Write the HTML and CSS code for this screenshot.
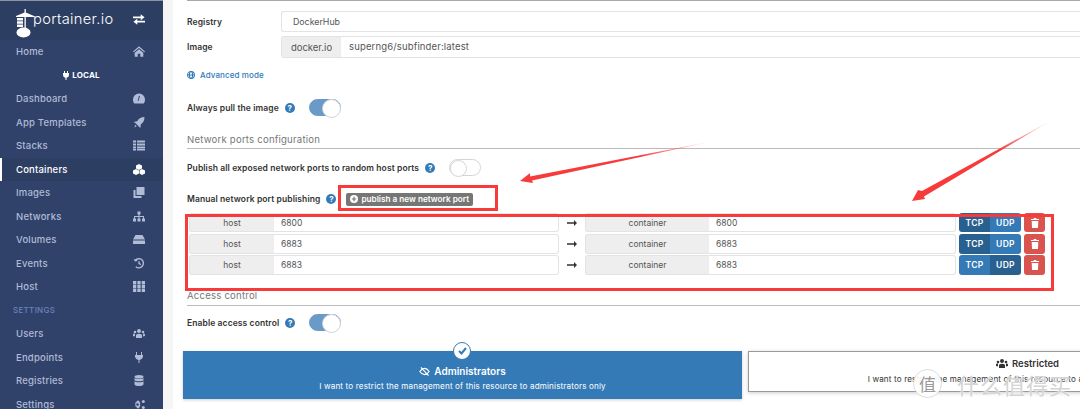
FILE: index.html
```html
<!DOCTYPE html>
<html lang="en">
<head>
  <meta charset="UTF-8">
  <title>Portainer - Create container</title>
  <link rel="stylesheet" href="styles.css">
</head>
<body>

<div class="page">
  <aside class="sidebar">
    <div class="brand">
      <svg class="brand-logo" width="21" height="29" viewBox="0 0 21 29" fill="#fff">
        <path d="M8.500 0h1.300v3.500L18 7v1H9.800v13H8.500V8H0V7l8.500-3.500z"/>
        <path d="M1 9h6v2.500H1zM1 12.300h6v2.500H1zM1 15.600h6v2.500H1z"/>
        <ellipse cx="7.500" cy="23.500" rx="7" ry="5"/>
      </svg>
      <span class="brand-name">portainer.io</span>
      <svg class="nav-icon brand-swap" viewBox="0 0 14 12">
        <path d="M0 2.500h9V0l4.500 3.500L9 7V4.500H0zM14 7.500H5V5L.5 8.500 5 12V9.500h9z"/>
      </svg>
    </div>
    <a class="nav-item">Home
      <svg class="nav-icon" viewBox="0 0 14 12"><path d="M7 0l7 6-.8.900L7 1.800.8 6.900 0 6zM2 7.500L7 3.300l5 4.200V12H8.500V8.500h-3V12H2z"/></svg>
    </a>
    <div class="nav-endpoint">
      <svg width="6" height="9" viewBox="0 0 6 9" fill="#fff"><path d="M1 0h1v2h2V0h1v2h1v2a3 3 0 0 1-2.500 2.800V9h-1V6.800A3 3 0 0 1 0 4V2h1z"/></svg>
      LOCAL
    </div>
    <a class="nav-item">Dashboard
      <svg class="nav-icon" viewBox="0 0 12 10"><path d="M6 0a6 6 0 0 1 6 6c0 1.500-.5 3-1.300 4H1.300A6.200 6.200 0 0 1 0 6a6 6 0 0 1 6-6zM5.500 7.500L7 2.500 6 2.300 4.700 7.200z"/></svg>
    </a>
    <a class="nav-item">App Templates
      <svg class="nav-icon" viewBox="0 0 12 12"><path d="M12 0c0 4-1.500 6.500-4 8l-.5 4L5.500 10 2 6.500 0 5.500l4-1C5.500 2 8 0 12 0zM2 8.500L3.500 10 1 11.500z"/></svg>
    </a>
    <a class="nav-item">Stacks
      <svg class="nav-icon" viewBox="0 0 12 10"><path d="M0 0h3v2H0zM4 0h8v2H4zM0 3h3v2H0zM4 3h8v2H4zM0 6h3v2H0zM4 6h8v2H4z"/><path d="M0 8.500h3V10H0zM4 8.500h8V10H4z"/></svg>
    </a>
    <a class="nav-item nav-item-active">Containers
      <svg class="nav-icon" viewBox="0 0 12 11"><path d="M6 0l3 1.500v3L6 6 3 4.500v-3zM3 5l3 1.500v3L3 11 0 9.500v-3zM9 5l3 1.500v3L9 11 6.500 9.500v-3z"/></svg>
    </a>
    <a class="nav-item">Images
      <svg class="nav-icon" viewBox="0 0 11 11"><path d="M3 0h8v8H3zM0 3h2v6h6v2H0z"/></svg>
    </a>
    <a class="nav-item">Networks
      <svg class="nav-icon" viewBox="0 0 12 10"><path d="M4.500 0h3v3h-1v1.500H11V7h1v3H9V7h1V5.500H6.500V7h1v3h-3V7h1V5.500H2V7h1v3H0V7h1V4.500h4.500V3h-1z"/></svg>
    </a>
    <a class="nav-item">Volumes
      <svg class="nav-icon" viewBox="0 0 12 9"><path d="M2.500 0h7L12 4.500H0zM0 5.500h12V9H0z"/></svg>
    </a>
    <a class="nav-item">Events
      <svg class="nav-icon nav-icon-line" viewBox="0 0 12 12"><path d="M2 2.500A5 5 0 1 1 2.500 9.500M6 3.500V6l2 1.300M.8 1.500l1.200 1.500 2-.5"/></svg>
    </a>
    <a class="nav-item">Host
      <svg class="nav-icon" viewBox="0 0 11 10"><path d="M0 0h3v3H0zM4 0h3v3H4zM8 0h3v3H8zM0 3.500h3v3H0zM4 3.500h3v3H4zM8 3.500h3v3H8zM0 7h3v3H0zM4 7h3v3H4zM8 7h3v3H8z"/></svg>
    </a>
    <div class="nav-title">SETTINGS</div>
    <a class="nav-item">Users
      <svg class="nav-icon" viewBox="0 0 12 9"><circle cx="6" cy="2" r="2"/><circle cx="2" cy="3" r="1.300"/><circle cx="10" cy="3" r="1.300"/><path d="M3 9V6.500C3 5.500 4 4.800 6 4.800s3 .700 3 1.700V9zM0 7V5.500C0 4.800.8 4.500 2 4.500v3zM12 7V5.500c0-.700-.8-1-2-1v3z"/></svg>
    </a>
    <a class="nav-item">Endpoints
      <svg class="nav-icon" viewBox="0 0 8 11"><path d="M1 0h1v3h4V0h1v3h1v1.500a4 4 0 0 1-3.500 3.400V11h-1V7.900A4 4 0 0 1 0 4.500V3h1z"/></svg>
    </a>
    <a class="nav-item">Registries
      <svg class="nav-icon" viewBox="0 0 9 11"><ellipse cx="4.500" cy="1.800" rx="4.500" ry="1.800"/><path d="M0 3c1 1.300 8 1.300 9 0v2.200c-1 1.500-8 1.500-9 0zM0 6.300c1 1.300 8 1.300 9 0v2.900C9 10.200 7 11 4.500 11S0 10.200 0 9.200z"/></svg>
    </a>
    <a class="nav-item">Settings
      <svg class="nav-icon" viewBox="0 0 12 10"><path d="M4 1l1 .5 1-.5.500 1.500 1 1L7 4.500v1l.5 1-1 .8L6 9l-1-.5L4 9l-.5-1.700-1.500-.8.500-1v-1L2 3.500l1.500-1zM4.500 3.700a1.300 1.300 0 1 0 0 2.600 1.300 1.300 0 0 0 0-2.600z"/><circle cx="10.300" cy="2" r="1.500"/><circle cx="10.300" cy="8" r="1.500"/></svg>
    </a>
  </aside>

  <div class="gutter"></div>

  <main class="content">
    <div class="form-row form-row-registry">
      <label class="form-label">Registry</label>
      <div class="field field-static">DockerHub</div>
    </div>
    <div class="form-row form-row-image">
      <label class="form-label">Image</label>
      <div class="input-group">
        <span class="addon addon-image">docker.io</span>
        <span class="group-value">superng6/subfinder:latest</span>
      </div>
    </div>
    <a class="advanced">
      <svg width="8" height="8" viewBox="0 0 10 10" fill="none" stroke="#337ab7" stroke-width="1.300"><circle cx="5" cy="5" r="4.300"/><ellipse cx="5" cy="5" rx="2" ry="4.300"/><path d="M.7 5h8.600"/></svg>
      Advanced mode
    </a>
    <div class="switch-row switch-row-pull">
      <label class="form-label">Always pull the image</label>
      <span class="help">?</span>
      <span class="switch switch-on"></span>
    </div>
    <div class="section-title section-network">Network ports configuration</div>
    <div class="switch-row switch-row-publish">
      <label class="form-label">Publish all exposed network ports to random host ports</label>
      <span class="help">?</span>
      <span class="switch"></span>
    </div>
    <div class="manual-row">
      <label class="form-label">Manual network port publishing</label>
      <span class="help">?</span>
      <span class="badge-btn">
        <svg width="8" height="8" viewBox="0 0 8 8"><circle cx="4" cy="4" r="4" fill="#fff"/><path d="M4 1.800v4.400M1.800 4h4.400" stroke="#767676" stroke-width="1.200"/></svg>
        publish a new network port
      </span>
    </div>

    <div class="port-list">
      <div class="port-row port-row-first">
        <span class="addon addon-host">host</span>
        <span class="port-value port-host">6800</span>
        <svg class="port-arrow" width="10" height="6" viewBox="0 0 10 6" fill="#333"><path d="M0 2.200h7V0l3 3-3 3V3.800H0z"/></svg>
        <span class="addon addon-container">container</span>
        <span class="port-value port-container">6800</span>
        <span class="proto"><b class="proto-on">TCP</b><b>UDP</b></span>
        <span class="trash"><svg width="8" height="10" viewBox="0 0 8 10" fill="#fff"><path d="M3 0h2l.5 1H8v1H0V1h2.500zM.7 3h6.600L7 10H1z"/></svg></span>
      </div>
      <div class="port-row">
        <span class="addon addon-host">host</span>
        <span class="port-value port-host">6883</span>
        <svg class="port-arrow" width="10" height="6" viewBox="0 0 10 6" fill="#333"><path d="M0 2.200h7V0l3 3-3 3V3.800H0z"/></svg>
        <span class="addon addon-container">container</span>
        <span class="port-value port-container">6883</span>
        <span class="proto"><b class="proto-on">TCP</b><b>UDP</b></span>
        <span class="trash"><svg width="8" height="10" viewBox="0 0 8 10" fill="#fff"><path d="M3 0h2l.5 1H8v1H0V1h2.500zM.7 3h6.600L7 10H1z"/></svg></span>
      </div>
      <div class="port-row">
        <span class="addon addon-host">host</span>
        <span class="port-value port-host">6883</span>
        <svg class="port-arrow" width="10" height="6" viewBox="0 0 10 6" fill="#333"><path d="M0 2.200h7V0l3 3-3 3V3.800H0z"/></svg>
        <span class="addon addon-container">container</span>
        <span class="port-value port-container">6883</span>
        <span class="proto"><b>TCP</b><b class="proto-on">UDP</b></span>
        <span class="trash"><svg width="8" height="10" viewBox="0 0 8 10" fill="#fff"><path d="M3 0h2l.5 1H8v1H0V1h2.500zM.7 3h6.600L7 10H1z"/></svg></span>
      </div>
    </div>

    <div class="section-title section-access">Access control</div>
    <div class="switch-row switch-row-access">
      <label class="form-label">Enable access control</label>
      <span class="help">?</span>
      <span class="switch switch-on"></span>
    </div>

    <div class="cards">
      <div class="card card-selected">
        <span class="card-check">
          <svg width="9" height="8" viewBox="0 0 9 8" fill="none" stroke="#337ab7" stroke-width="2"><path d="M1 4l2.500 2.500L8 1"/></svg>
        </span>
        <div class="card-title">
          <svg width="11" height="9" viewBox="0 0 12 10" fill="none" stroke="#fff" stroke-width="1.300"><path d="M.8 5C2.500 2.500 4 1.500 6 1.500S9.500 2.500 11.200 5C9.500 7.500 8 8.500 6 8.500S2.500 7.500.8 5zM2 .5l8.500 9"/></svg>
          Administrators
        </div>
        <div class="card-text">I want to restrict the management of this resource to administrators only</div>
      </div>
      <div class="card card-plain">
        <div class="card-title">
          <svg width="12" height="9" viewBox="0 0 12 9" fill="#333"><circle cx="6" cy="2" r="2"/><circle cx="2" cy="3" r="1.300"/><circle cx="10" cy="3" r="1.300"/><path d="M3 9V6.500C3 5.500 4 4.800 6 4.800s3 .700 3 1.700V9zM0 7V5.500C0 4.800.8 4.500 2 4.500v3zM12 7V5.500c0-.700-.8-1-2-1v3z"/></svg>
          Restricted
        </div>
        <div class="card-text">I want to restrict the management of this resource to a set of users and/or teams</div>
      </div>
    </div>
  </main>

  <!-- red marks drawn on the screenshot -->
  <div class="mark mark-publish"></div>
  <div class="mark mark-ports"></div>
  <svg class="mark-arrows" width="1080" height="409" viewBox="0 0 1080 409">
    <defs>
      <linearGradient id="fadeLeft" gradientUnits="userSpaceOnUse" x1="714" y1="141" x2="640" y2="155">
        <stop offset="0" stop-color="#f73b3b" stop-opacity="0"/>
        <stop offset="1" stop-color="#f73b3b"/>
      </linearGradient>
      <linearGradient id="fadeRight" gradientUnits="userSpaceOnUse" x1="1052" y1="120" x2="1000" y2="150">
        <stop offset="0" stop-color="#f73b3b" stop-opacity="0"/>
        <stop offset="1" stop-color="#f73b3b"/>
      </linearGradient>
    </defs>
    <path fill="url(#fadeLeft)" d="M714 141L530 176.500 530 173 520 181 533 183 532 180.500z"/>
    <path fill="url(#fadeRight)" d="M1052 120L922 191 918 190 912 201 925 199 924 196.500z"/>
  </svg>

  <div class="watermark">
    <span class="watermark-seal">值</span>
    <span class="watermark-text">什么值得买</span>
  </div>
</div>

</body>
</html>
```

FILE: styles.css
```css
* { box-sizing: border-box; }
html, body { margin: 0; height: 100%; overflow: hidden; background: #fff; }
body { font-family: Inter, "Open Sans", sans-serif; font-size: 10px; color: #333; }
.page { position: relative; display: flex; width: 1080px; height: 409px; overflow: hidden; }

/* sidebar */
.sidebar { flex: 0 0 163px; background: #30426a; border-top: 1px solid #8c93a3; color: #b0bbd6; }
.brand { display: flex; align-items: center; height: 39px; padding-left: 16px; background: #2d3e63; }
.brand-logo { flex: none; margin-top: 6px; margin-right: -5px; }
.brand-name { margin-left: 1px; margin-top: -4px; font-size: 14.700px; font-weight: 300; color: #fff; letter-spacing: .3px; }
.brand-swap { margin-left: 20px; margin-top: -2px; }
.nav-item { display: flex; align-items: center; justify-content: space-between; height: 23.500px; padding: 0 18px 0 16px; font-size: 9.500px; font-weight: 500; letter-spacing: .2px; }
.nav-item-active { background: #2d3e63; border-left: 2px solid #fff; padding-left: 14px; color: #fff; }
.nav-icon { width: 12px; height: 11px; fill: #b0bbd6; flex: none; }
.nav-item-active .nav-icon { fill: #fff; }
.nav-icon-line { fill: none; stroke: #b0bbd6; stroke-width: 1.500; }
.brand-swap.nav-icon { fill: #fff; }
.nav-endpoint { display: flex; align-items: center; justify-content: center; gap: 3px; height: 23.500px; font-size: 8px; font-weight: 700; color: #fff; letter-spacing: .2px; }
.nav-title { display: flex; align-items: center; height: 23.500px; padding-left: 13px; font-size: 8px; font-weight: 500; color: #6a83bb; letter-spacing: .3px; }

.gutter { flex: 0 0 10px; background: #f5f5f5; }

/* form */
.content { flex: 1; min-width: 0; padding: 1px 0 0 14px; position: relative; }
.content::before { content: ""; display: block; height: 1px; margin-top: -1px; background: #a9a9a9; }
.form-label { font-size: 8.500px; font-weight: 600; color: #333; letter-spacing: .1px; white-space: nowrap; }
.form-row { display: flex; align-items: center; }
.form-row .form-label { flex: 0 0 94px; }
.form-row-registry { margin-top: 10px; height: 21px; }
.form-row-image { margin-top: 4px; height: 22px; }
.field { flex: 1; height: 21px; padding-left: 11px; line-height: 19px; border: 1px solid #e3e3e3; border-right: 0; border-radius: 3px 0 0 3px; font-size: 8.800px; color: #555; }
.input-group { flex: 1; display: flex; height: 22px; border: 1px solid #e3e3e3; border-right: 0; border-radius: 3px 0 0 3px; }
.addon { display: flex; align-items: center; justify-content: center; background: #eee; color: #555; font-size: 8.500px; }
.addon-image { flex: 0 0 59px; font-size: 9.500px; }
.group-value { padding-left: 8px; line-height: 20px; font-size: 9.500px; color: #555; letter-spacing: .15px; }
.advanced { display: flex; align-items: center; gap: 5px; margin-top: 9px; height: 15px; color: #337ab7; font-size: 8px; font-weight: 500; letter-spacing: .1px; }
.switch-row { display: flex; align-items: center; }
.help { display: inline-block; width: 10px; height: 10px; margin-left: 6px; border-radius: 50%; background: #337ab7; color: #fff; font-size: 8px; font-weight: 700; line-height: 10px; text-align: center; }
.switch { position: relative; width: 32px; height: 17px; margin-left: 14px; border-radius: 9px; border: 1px solid #d5d5d5; background: #fff; }
.switch::after { content: ""; position: absolute; left: 0; top: 0; width: 15px; height: 15px; border-radius: 50%; background: #fff; border: 1px solid #d5d5d5; }
.switch-on { background: #6a9bc8; border-color: #6a9bc8; }
.switch-on::after { left: auto; right: -1px; top: -1px; width: 17px; height: 17px; }
.switch-row-pull { margin-top: 17px; height: 17px; }
.section-title { font-size: 9.600px; color: #777; letter-spacing: .2px; border-bottom: 1px solid #bbb; }
.section-network { margin-top: 18px; height: 15px; }
.switch-row-publish { margin-top: 10px; height: 17px; }
.manual-row { display: flex; align-items: center; margin-top: 15px; height: 16px; }
.badge-btn { display: inline-flex; align-items: center; gap: 3px; height: 13px; margin-left: 10px; padding: 0 4px; border-radius: 2px; background: #767676; color: #fff; font-size: 8.200px; font-weight: 600; white-space: nowrap; }

/* ports */
.port-list { margin-top: 6px; margin-left: 2px; }
.port-row { display: flex; align-items: center; height: 20px; margin-bottom: 1.500px; }
.port-row-first { height: 19px; }
.addon-host { flex: 0 0 85px; height: 100%; border: 1px solid #e3e3e3; border-right: 0; border-radius: 3px 0 0 3px; }
.addon-container { flex: 0 0 124px; height: 100%; border: 1px solid #e3e3e3; border-right: 0; border-radius: 3px 0 0 3px; }
.port-value { display: flex; align-items: center; height: 100%; padding-left: 7px; border: 1px solid #e3e3e3; border-left: 0; border-radius: 0 3px 3px 0; font-size: 8.500px; color: #555; }
.port-host { flex: 0 0 285px; }
.port-container { flex: 0 0 247px; }
.port-arrow { flex: none; margin: 0 8px; }
.proto { display: flex; height: 100%; margin-left: 3px; border-radius: 3px; overflow: hidden; }
.proto b { display: flex; align-items: center; justify-content: center; width: 31px; background: #337ab7; color: #fff; font-size: 8.500px; font-weight: 600; letter-spacing: .3px; }
.proto .proto-on { background: #286090; }
.trash { display: flex; align-items: center; justify-content: center; width: 21px; height: 100%; margin-left: 3px; border-radius: 3px; background: #d9534f; }

.section-access { margin-top: 15px; height: 16px; }
.switch-row-access { margin-top: 8px; height: 17px; }

/* ownership cards */
.cards { display: flex; gap: 6px; margin: 20px 0 0 -4px; }
.card { position: relative; flex: 0 0 559px; text-align: center; }
.card-selected { height: 48px; background: #337ab7; color: #fff; box-shadow: 0 1px 3px rgba(0, 0, 0, .2); }
.card-plain { height: 41px; border: 1px solid #999; background: #fff; box-shadow: 0 1px 4px rgba(0, 0, 0, .2); }
.card-check { position: absolute; left: 270px; top: -9px; display: flex; align-items: center; justify-content: center; width: 18px; height: 18px; border-radius: 50%; background: #fff; border: 1.500px solid #337ab7; }
.card-title { display: flex; align-items: center; justify-content: center; gap: 4px; font-size: 10px; font-weight: 600; }
.card-selected .card-title { padding-top: 14px; }
.card-plain .card-title { margin-top: 6px; font-size: 9.500px; }
.card-text { margin-top: 4px; font-size: 8.100px; letter-spacing: .15px; white-space: nowrap; }
.card-plain .card-text { margin-top: 5px; }

/* annotations */
.mark { position: absolute; border: 3px solid #f73b3b; pointer-events: none; }
.mark-publish { left: 338px; top: 185px; width: 160px; height: 26px; }
.mark-ports { left: 185px; top: 214px; width: 869px; height: 77px; }
.mark-arrows { position: absolute; left: 0; top: 0; pointer-events: none; }

.watermark { position: absolute; left: 913px; top: 369px; display: flex; align-items: center; gap: 15px; font-family: "Noto Sans CJK SC", sans-serif; }
.watermark-seal { display: flex; align-items: center; justify-content: center; width: 29px; height: 29px; border-radius: 50%; border: 1px solid #ddd; background: rgba(255, 255, 255, .92); color: #999; font-size: 17px; line-height: 1; }
.watermark-text { font-size: 22px; line-height: 1; letter-spacing: 1px; color: #d4d4d4; text-shadow: 0 0 2px #fff; white-space: nowrap; }
```
